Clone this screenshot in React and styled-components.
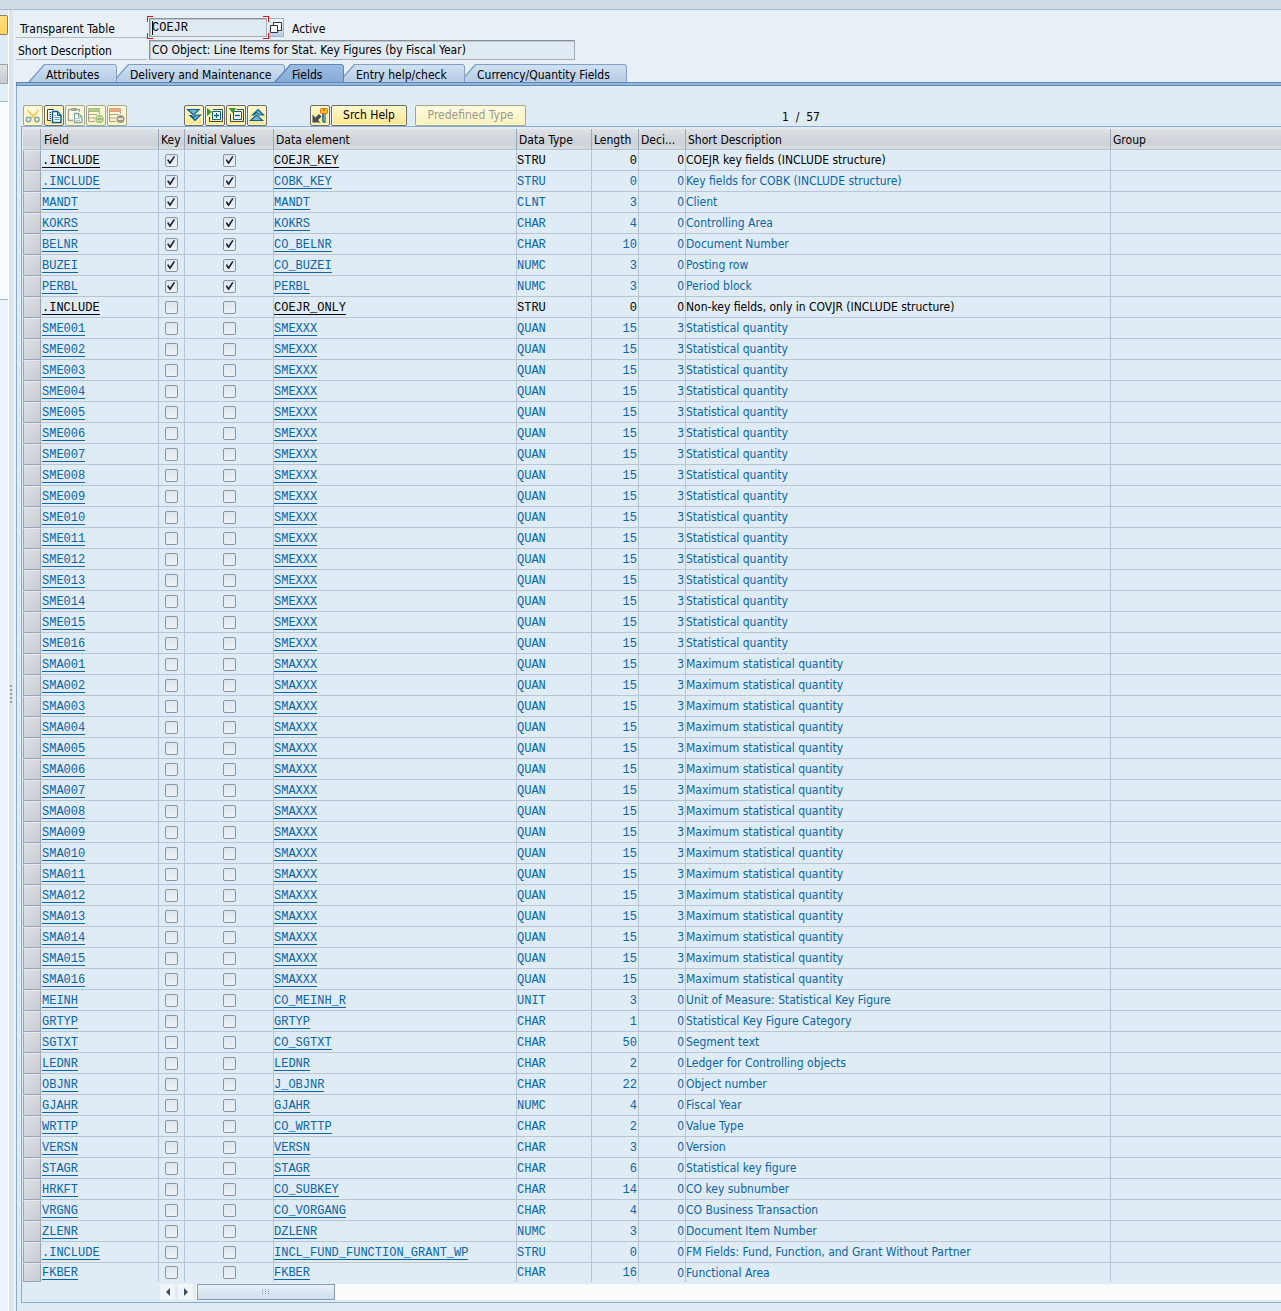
import React from "react";
import styled, { createGlobalStyle, css } from "styled-components";

const sans = `"DejaVu Sans Condensed", "DejaVu Sans", sans-serif`;
const mono = `"Liberation Mono", monospace`;
const color = {
  link: "#0a66ab",
  text: "#000",
  page: "#e7eff7",
  panel: "#dfebf5",
  line: "#8aabcd",
  grid: "#b7c5d5",
};

const GlobalStyle = createGlobalStyle`
  * { box-sizing: border-box; }
  body { margin: 0; background: ${color.page}; font: 12px/16px ${sans}; color: ${color.text}; }
  button, input { font: inherit; color: inherit; margin: 0; padding: 0; }
`;

const Shell = styled.div`
  min-height: 100vh;
  display: flex;
  flex-direction: column;
  overflow: hidden;
`;
const TitleStrip = styled.div`
  height: 10px;
  flex: none;
  background: #cfdce6;
  border-bottom: 1px solid #a5bacd;
`;
const Body = styled.div`
  flex: 1;
  display: flex;
`;

/* Side tree, collapsed to its edge */
const SideBar = styled.aside`
  width: 8px;
  flex: none;
  display: flex;
  flex-direction: column;
  background: #dfebf3;
  padding-top: 5px;
`;
const SideButton = styled.button`
  height: 20px;
  border: 1px solid #8a7f5a;
  border-left: 0;
  border-radius: 0 2px 2px 0;
  background: linear-gradient(#fddd7c, #fcd364);
`;
const SideHeader = styled.div`
  height: 20px;
  margin-top: 29px;
  border: 1px solid #9aa5b2;
  border-left: 0;
  background: linear-gradient(#dde1e5, #c6cbd2);
`;
const SideGap = styled.div`
  height: 18px;
  background: #e4eef6;
  border-bottom: 1px solid #9db8d3;
`;
const SideList = styled.div`
  height: 198px;
  background: #f8fbff;
  border-bottom: 1px solid #9db8d3;
`;
const SideRest = styled.div`
  flex: 1;
  background: #ebf3fd;
`;
const Splitter = styled.div`
  width: 5px;
  flex: none;
  display: flex;
  flex-direction: column;
  justify-content: center;
  align-items: center;
  gap: 2px;
  padding-top: 66px;
  background: #dbe5eb;
  border-left: 1px solid #fff;
`;
const Dot = styled.span`
  width: 2px;
  height: 2px;
  background: #95a2af;
`;

const Main = styled.main`
  flex: 1;
  min-width: 0;
  display: flex;
  flex-direction: column;
  padding: 6px 0 0 3px;
`;
const FormRow = styled.div`
  display: flex;
  align-items: flex-start;
  margin-bottom: ${p => p.$after}px;
`;
const Label = styled.label`
  width: 131px;
  height: ${p => p.$height}px;
  padding: ${p => p.$top}px 0 0 ${p => p.$left}px;
  border-bottom: 1px solid #b3b9c0;
`;
const inputBox = css`
  border: 1px solid #a4abb3;
  border-top-color: #8b9199;
  border-left-color: #8b9199;
  border-radius: 0;
  background: #dfeaf3;
  box-shadow: inset 1px 1px 0 #bcc4cc;
  outline: none;
`;
const red = "linear-gradient(#e0141c, #e0141c)";
const FocusFrame = styled.div`
  position: relative;
  padding: 2px;
  background-image: ${Array(8).fill(red).join(",")};
  background-repeat: no-repeat;
  background-size: 6px 1px, 1px 6px, 6px 1px, 1px 6px, 6px 1px, 1px 6px, 6px 1px, 1px 6px;
  background-position: 0 0, 0 0, 100% 0, 100% 0, 0 100%, 0 100%, 100% 100%, 100% 100%;
  &::before {
    content: "";
    position: absolute;
    left: 5px;
    top: 5px;
    width: 1px;
    height: 14px;
    background: #000;
  }
`;
const NameInput = styled.input`
  ${inputBox}
  display: block;
  width: 118px;
  height: 19px;
  padding-left: 2px;
  font-family: ${mono};
`;
const DescInput = styled.input`
  ${inputBox}
  width: 426px;
  height: 20px;
  margin-left: 2px;
  padding-left: 2px;
`;
const HelpButton = styled.button`
  width: 15px;
  height: 19px;
  margin-top: 2px;
  display: grid;
  place-items: center;
  border: 1px solid #9fb0c4;
  border-left: 0;
  background: linear-gradient(#f4f8fc, #b9cde6);
`;
const Status = styled.span`
  margin: 5px 0 0 8px;
`;

const TabList = styled.div`
  display: flex;
  height: 18px;
  padding-left: 12px;
`;
const Tab = styled.button`
  flex: none;
  width: ${p => p.$width}px;
  margin-left: -${p => p.$overlap}px;
  padding-left: 18px;
  text-align: left;
  line-height: 22px;
  border: 0;
  z-index: ${p => p.$level};
  display: grid;
  background: ${p => (p.$active ? "#5f87b6" : "#7f9fc3")};
  clip-path: polygon(0 100%, 16px 0, calc(100% - 2px) 0, 100% 2px, 100% 100%);
  white-space: nowrap;
  &::before {
    content: "";
    grid-area: 1 / 1;
    height: 18px;
    margin-left: -18px;
    background: ${p => (p.$active ? "linear-gradient(#9dbde3, #86abd6)" : "linear-gradient(#d2e2f3, #b4cce5)")};
    clip-path: polygon(2px 100%, 17px 1px, calc(100% - 2px) 1px, calc(100% - 1px) 3px, calc(100% - 1px) 100%);
  }
  span { grid-area: 1 / 1; height: 18px; z-index: 1; }
`;
const Panel = styled.section`
  flex: 1;
  display: flex;
  flex-direction: column;
  border-left: 1px solid ${color.line};
  background: ${color.panel};
  padding-bottom: 8px;
`;
const PanelBar = styled.div`
  height: 4px;
  margin-left: -1px;
  background: #95b6dd;
  border: solid #5f88b3;
  border-width: 1px 0 1px 1px;
`;
const Toolbar = styled.div`
  display: flex;
  padding: 19px 0 0 6px;
`;
const ToolGroup = styled.div`
  display: flex;
  gap: 1px;
  margin-right: ${p => p.$after}px;
`;
const ToolButton = styled.button`
  width: ${p => p.$width || 20}px;
  height: 21px;
  display: grid;
  place-items: center;
  line-height: 19px;
  border: 1px solid #6f6d62;
  border-radius: 2px;
  background: linear-gradient(#fff8cf, #fce68e);
  box-shadow: inset 0 0 0 1px #fff7cf;
  white-space: nowrap;
  &:disabled {
    border-color: #a9a692;
    background: linear-gradient(#fffbe2, #fcf1bd);
    color: #9a9a90;
  }
  &:disabled svg { opacity: 0.5; }
`;
const Counter = styled.span`
  padding-top: 4px;
  white-space: pre;
`;

const TableBox = styled.div`
  margin-left: 4px;
  padding: 2px 0 2px 1px;
  border: solid ${color.line};
  border-width: 1px 0 1px 1px;
  overflow: hidden;
`;
const Grid = styled.table`
  width: 100%;
  table-layout: fixed;
  border-collapse: separate;
  border-spacing: 0;
`;
const Col = styled.col`
  width: ${p => (p.$width ? p.$width + "px" : "auto")};
`;
const Th = styled.th`
  height: 21px;
  padding: 1px 0 0 ${p => p.$pad}px;
  text-align: left;
  font-weight: normal;
  overflow: hidden;
  text-overflow: ellipsis;
  white-space: nowrap;
  background: linear-gradient(#e1e4e7 0, #d9dce0 3px, #cdd1d8 14px, #d5dade 19px);
  border-right: 1px solid #9aa9ba;
  border-bottom: 1px solid #b3c0ce;
  &:last-child { border-right: 0; }
`;
const Row = styled.tr`
  color: ${p => (p.$plain ? color.text : color.link)};
  > * { height: 21px; }
  &:last-child > * { height: 19px; }
  &:last-child > td { border-bottom-width: 0; }
  &:last-child > td:first-child { border-bottom-width: 1px; }
`;
const Td = styled.td`
  padding: ${p => (p.$mono ? 1 : 0)}px 1px 0 ${p => p.$pad || 0}px;
  line-height: 14px;
  text-align: ${p => p.$align || "left"};
  font-family: ${p => (p.$mono ? mono : sans)};
  white-space: nowrap;
  overflow: hidden;
  border-right: 1px solid ${color.grid};
  border-bottom: 1px solid ${color.grid};
  &:last-child { border-right: 0; }
`;
const SelectorCell = styled.td`
  padding: 0;
  background: linear-gradient(135deg, #dde0e3, #c8ccd3);
  border: 1px solid #9ba5b1;
  border-top-color: #e6eaed;
`;
const RowButton = styled.button`
  display: block;
  width: 100%;
  height: 16px;
  border: 0;
  background: none;
`;
const FieldLink = styled.a`
  display: inline-block;
  vertical-align: top;
  height: 14px;
  color: inherit;
  text-decoration: none;
  border-bottom: 1px solid currentColor;
`;
const CheckBox = styled.input`
  appearance: none;
  display: grid;
  place-items: center;
  width: 13px;
  height: 13px;
  margin: 0 auto;
  border: 1px solid #8e949c;
  border-radius: 2px;
  background: linear-gradient(#dde7ef, #ebf2f8);
  &:checked::before {
    content: "";
    width: 8px;
    height: 8px;
    background: #1c2433;
    clip-path: polygon(0 50%, 18% 40%, 38% 68%, 84% 0, 100% 10%, 44% 100%, 32% 100%);
  }
`;

const ScrollBar = styled.div`
  display: flex;
  height: 16px;
  margin: 2px 0 0 137px;
`;
const Arrow = styled.button`
  width: 15px;
  margin-right: 3px;
  display: grid;
  place-items: center;
  border: 0;
  background: #f0f5fa;
`;
const Track = styled.div`
  flex: 1;
  padding-left: 1px;
  background: #fbfcfc;
`;
const Thumb = styled.div`
  width: 138px;
  height: 16px;
  display: grid;
  place-items: center;
  border: 1px solid #8a9cb0;
  background: linear-gradient(#e9f0f8, #cfdded);
`;

const Icon = ({ children }) => (
  <svg width="18" height="19" viewBox="0 0 18 19" fill="none" aria-hidden="true">
    {children}
  </svg>
);
const blue = "#05628f";

const icons = {
  cut: (
    <Icon>
      <path d="M3 2.500 3.500 6l7 7 1.500-1.500Z" fill="#f3a417" />
      <path d="M15 2.500 14.500 6l-7 7L6 11.500Z" fill="#f3a417" />
      <circle cx="4.500" cy="13.500" r="2.200" stroke={blue} strokeWidth="1.500" />
      <circle cx="13" cy="13.500" r="2.200" stroke={blue} strokeWidth="1.500" />
    </Icon>
  ),
  copy: (
    <Icon>
      <path d="M8.500 14.500h-6v-11h7v2" fill="#fff" />
      <path d="M6 14.500H2.500v-11H9M4.500 6.500H6M4.500 8.500H6M4.500 10.500H6M4.500 12.500H6" stroke="#3f4a56" />
      <path d="M7.500 5.500h5l3.500 4v7H7.500Z" fill="#fff" stroke={blue} strokeWidth="1.500" />
      <path d="M12.500 5.500v4H16Z" fill="#8cc0dd" stroke={blue} />
      <path d="M9.500 9.500h1.500M9.500 11.500h5M9.500 13.500h5" stroke="#5fa0c4" />
    </Icon>
  ),
  paste: (
    <Icon>
      <path d="M7 14.500H2.500v-11h11V6" fill="#fff" stroke="#4d565f" strokeWidth="1.300" />
      <path d="M5 2h6v3H5Z" fill="#4d565f" />
      <path d="M8.500 7.500h4l3.500 3.500v5.500H8.500Z" fill="#fff" stroke={blue} strokeWidth="1.300" />
      <path d="M12.500 7.500V11H16" stroke={blue} />
      <path d="M10 12.500h4M10 14.500h4" stroke="#5fa0c4" />
    </Icon>
  ),
  insertRow: (
    <Icon>
      <path d="M1.500 2.500h11v3h-11Z" fill="#6ba92f" stroke="#5a7b3a" />
      <path d="M12.500 6v2M1.500 5v10.500H8M2 8.500h8M2 12h6" stroke="#4d565f" />
      <circle cx="12.500" cy="13" r="3.500" fill="#fff" stroke="#41902c" strokeWidth="1.600" />
      <path d="M12.500 10.500v5M10 13h5" stroke="#41902c" strokeWidth="1.800" />
    </Icon>
  ),
  deleteRow: (
    <Icon>
      <path d="M1.500 2.500h11v3h-11Z" fill="#dd5a2a" stroke="#b3512d" />
      <path d="M12.500 6v2M1.500 5v10.500H8M2 8.500h8M2 12h6" stroke="#4d565f" />
      <circle cx="12.500" cy="13" r="4" fill="#3d434b" />
      <path d="M10 13h5" stroke="#fff" strokeWidth="1.500" />
    </Icon>
  ),
  allDown: (
    <Icon>
      <path d="M6.500 9.500 9.500 6h6l-5 9-5-5Z" fill="none" />
      <path d="M2.500 3.500H14L8.500 9Z" fill="#76b5db" stroke={blue} strokeWidth="1.200" />
      <path d="M5 9.500h1.500L8.500 11.500 11 9h4.500L10 14.500Z" fill="#76b5db" stroke={blue} strokeWidth="1.200" />
    </Icon>
  ),
  expand: (
    <Icon>
      <path d="M7 3.500h9.500v12H3.500V11" stroke="#3f4a56" />
      <path d="M6.500 5.500h8v8h-8Z" fill="#fff" stroke={blue} />
      <path d="M8 9.500h5M10.500 7v5" stroke={blue} strokeWidth="1.300" />
      <path d="M1 2 6 6 1 10Z" fill="#3c9b27" />
    </Icon>
  ),
  collapse: (
    <Icon>
      <path d="M10 3.500h6.500v12H3.500V8" stroke="#3f4a56" />
      <path d="M6.500 5.500h8v8h-8Z" fill="#fff" stroke={blue} />
      <path d="M8 9.500h5" stroke={blue} strokeWidth="1.500" />
      <path d="M1.500 2h8l-4 5Z" fill="#3c9b27" />
    </Icon>
  ),
  allUp: (
    <Icon>
      <path d="M4.500 9 10 3.500 15.500 9H11L8.500 6.500 6 9Z" fill="#76b5db" stroke={blue} strokeWidth="1.200" />
      <path d="M2.500 14.500 8.500 9l6 5.500Z" fill="#76b5db" stroke={blue} strokeWidth="1.200" />
    </Icon>
  ),
  key: (
    <Icon>
      <path d="M1.500 8.500v8h8L7 14l3.500-3.500-2.500-2.500-3.500 3.500Z" fill="#454c54" />
      <path d="M12 7.500v7.500l1.500 1.500" stroke={blue} strokeWidth="1.500" />
      <path d="M14 7.500v9" stroke={blue} strokeWidth="2" strokeDasharray="1 1" />
      <rect x="9.500" y="2.500" width="7" height="5" rx="1" fill="#fdbf1e" stroke="#e0701c" />
      <path d="M12 4h2" stroke="#83500e" />
    </Icon>
  ),
};

const tabs = [
  { label: "Attributes", width: 89, overlap: 0, level: 4 },
  { label: "Delivery and Maintenance", width: 173, overlap: 5, level: 3 },
  { label: "Fields", width: 70, overlap: 11, level: 5, active: true },
  { label: "Entry help/check", width: 127, overlap: 6, level: 2 },
  { label: "Currency/Quantity Fields", width: 168, overlap: 6, level: 1 },
];

const columns = [
  { label: "", width: 18, pad: 0 },
  { label: "Field", width: 118, pad: 3 },
  { label: "Key", width: 26, pad: 2 },
  { label: "Initial Values", width: 89, pad: 2 },
  { label: "Data element", width: 243, pad: 2 },
  { label: "Data Type", width: 75, pad: 2 },
  { label: "Length", width: 47, pad: 2 },
  { label: "Decimal Places", short: "Deci...", width: 47, pad: 2 },
  { label: "Short Description", width: 425, pad: 2 },
  { label: "Group", pad: 2 },
];

const pad3 = n => String(n).padStart(3, "0");
const numbered = (prefix, element, text) =>
  Array.from({ length: 16 }, (_, i) => [prefix + pad3(i + 1), 0, element, "QUAN", 15, 3, text]);

const fields = [
  [".INCLUDE", 1, "COEJR_KEY", "STRU", 0, 0, "COEJR key fields (INCLUDE structure)", true],
  [".INCLUDE", 1, "COBK_KEY", "STRU", 0, 0, "Key fields for COBK (INCLUDE structure)"],
  ["MANDT", 1, "MANDT", "CLNT", 3, 0, "Client"],
  ["KOKRS", 1, "KOKRS", "CHAR", 4, 0, "Controlling Area"],
  ["BELNR", 1, "CO_BELNR", "CHAR", 10, 0, "Document Number"],
  ["BUZEI", 1, "CO_BUZEI", "NUMC", 3, 0, "Posting row"],
  ["PERBL", 1, "PERBL", "NUMC", 3, 0, "Period block"],
  [".INCLUDE", 0, "COEJR_ONLY", "STRU", 0, 0, "Non-key fields, only in COVJR (INCLUDE structure)", true],
  ...numbered("SME", "SMEXXX", "Statistical quantity"),
  ...numbered("SMA", "SMAXXX", "Maximum statistical quantity"),
  ["MEINH", 0, "CO_MEINH_R", "UNIT", 3, 0, "Unit of Measure: Statistical Key Figure"],
  ["GRTYP", 0, "GRTYP", "CHAR", 1, 0, "Statistical Key Figure Category"],
  ["SGTXT", 0, "CO_SGTXT", "CHAR", 50, 0, "Segment text"],
  ["LEDNR", 0, "LEDNR", "CHAR", 2, 0, "Ledger for Controlling objects"],
  ["OBJNR", 0, "J_OBJNR", "CHAR", 22, 0, "Object number"],
  ["GJAHR", 0, "GJAHR", "NUMC", 4, 0, "Fiscal Year"],
  ["WRTTP", 0, "CO_WRTTP", "CHAR", 2, 0, "Value Type"],
  ["VERSN", 0, "VERSN", "CHAR", 3, 0, "Version"],
  ["STAGR", 0, "STAGR", "CHAR", 6, 0, "Statistical key figure"],
  ["HRKFT", 0, "CO_SUBKEY", "CHAR", 14, 0, "CO key subnumber"],
  ["VRGNG", 0, "CO_VORGANG", "CHAR", 4, 0, "CO Business Transaction"],
  ["ZLENR", 0, "DZLENR", "NUMC", 3, 0, "Document Item Number"],
  [".INCLUDE", 0, "INCL_FUND_FUNCTION_GRANT_WP", "STRU", 0, 0, "FM Fields: Fund, Function, and Grant Without Partner"],
  ["FKBER", 0, "FKBER", "CHAR", 16, 0, "Functional Area"],
];

function FieldRow({ data }) {
  const [name, key, element, type, length, decimals, text, plain] = data;
  return (
    <Row $plain={plain}>
      <SelectorCell><RowButton aria-label={`Select ${name}`} /></SelectorCell>
      <Td $mono $pad={1}><FieldLink href="#field">{name}</FieldLink></Td>
      <Td><CheckBox type="checkbox" aria-label="Key" defaultChecked={!!key} /></Td>
      <Td $pad={2}><CheckBox type="checkbox" aria-label="Initial Values" defaultChecked={!!key} /></Td>
      <Td $mono><FieldLink href="#element">{element}</FieldLink></Td>
      <Td $mono>{type}</Td>
      <Td $mono $align="right">{length}</Td>
      <Td $align="right">{decimals}</Td>
      <Td>{text}</Td>
      <Td />
    </Row>
  );
}

export default function App() {
  return (
    <Shell>
      <GlobalStyle />
      <TitleStrip />
      <Body>
        <SideBar>
          <SideButton aria-label="Navigation" />
          <SideHeader />
          <SideGap />
          <SideList />
          <SideRest />
        </SideBar>
        <Splitter>
          <Dot /><Dot /><Dot /><Dot /><Dot />
        </Splitter>
        <Main>
          <FormRow $after={1}>
            <Label htmlFor="table" $height={22} $top={5} $left={4}>Transparent Table</Label>
            <FocusFrame><NameInput id="table" defaultValue="COEJR" /></FocusFrame>
            <HelpButton aria-label="Value help">
              <svg width="12" height="13" viewBox="0 0 12 13" fill="#fff" stroke="#333">
                <path d="M3.500 1.500h8v8h-8Z" />
                <path d="M.5 4.500h7v7h-7Z" />
              </svg>
            </HelpButton>
            <Status>Active</Status>
          </FormRow>
          <FormRow $after={4}>
            <Label htmlFor="description" $height={20} $top={3} $left={2}>Short Description</Label>
            <DescInput id="description" defaultValue="CO Object: Line Items for Stat. Key Figures (by Fiscal Year)" />
          </FormRow>
          <TabList role="tablist">
            {tabs.map(t => (
              <Tab key={t.label} role="tab" aria-selected={!!t.active} $width={t.width} $overlap={t.overlap} $level={t.level} $active={t.active}>
                <span>{t.label}</span>
              </Tab>
            ))}
          </TabList>
          <Panel>
            <PanelBar />
            <Toolbar>
              <ToolGroup $after={57}>
                <ToolButton disabled aria-label="Cut">{icons.cut}</ToolButton>
                <ToolButton aria-label="Copy">{icons.copy}</ToolButton>
                <ToolButton disabled aria-label="Paste">{icons.paste}</ToolButton>
                <ToolButton disabled aria-label="Insert row">{icons.insertRow}</ToolButton>
                <ToolButton disabled aria-label="Delete row">{icons.deleteRow}</ToolButton>
              </ToolGroup>
              <ToolGroup $after={43}>
                <ToolButton aria-label="Expand all">{icons.allDown}</ToolButton>
                <ToolButton aria-label="Expand include">{icons.expand}</ToolButton>
                <ToolButton aria-label="Collapse include">{icons.collapse}</ToolButton>
                <ToolButton aria-label="Collapse all">{icons.allUp}</ToolButton>
              </ToolGroup>
              <ToolGroup $after={8}>
                <ToolButton aria-label="Foreign keys">{icons.key}</ToolButton>
                <ToolButton $width={76}>Srch Help</ToolButton>
              </ToolGroup>
              <ToolGroup $after={256}>
                <ToolButton disabled $width={111}>Predefined Type</ToolButton>
              </ToolGroup>
              <Counter>1  /  57</Counter>
            </Toolbar>
            <TableBox>
              <Grid>
                <colgroup>
                  {columns.map((c, i) => <Col key={i} $width={c.width} />)}
                </colgroup>
                <thead>
                  <tr>
                    {columns.map((c, i) => <Th key={i} $pad={c.pad} title={c.label}>{c.short || c.label}</Th>)}
                  </tr>
                </thead>
                <tbody>
                  {fields.map((f, i) => <FieldRow key={i} data={f} />)}
                </tbody>
              </Grid>
              <ScrollBar>
                <Arrow aria-label="Scroll left">
                  <svg width="6" height="8" viewBox="0 0 6 8" fill="#3a4e60"><path d="M5 0v8L1 4Z" /></svg>
                </Arrow>
                <Arrow aria-label="Scroll right">
                  <svg width="6" height="8" viewBox="0 0 6 8" fill="#3a4e60"><path d="M1 0v8l4-4Z" /></svg>
                </Arrow>
                <Track>
                  <Thumb>
                    <svg width="8" height="6" viewBox="0 0 8 6" fill="#8fa0b2">
                      <path d="M0 0h1v1H0ZM3 0h1v1H3ZM6 0h1v1H6ZM0 2h1v1H0ZM3 2h1v1H3ZM6 2h1v1H6ZM0 4h1v1H0ZM3 4h1v1H3ZM6 4h1v1H6Z" />
                    </svg>
                  </Thumb>
                </Track>
              </ScrollBar>
            </TableBox>
          </Panel>
        </Main>
      </Body>
    </Shell>
  );
}
